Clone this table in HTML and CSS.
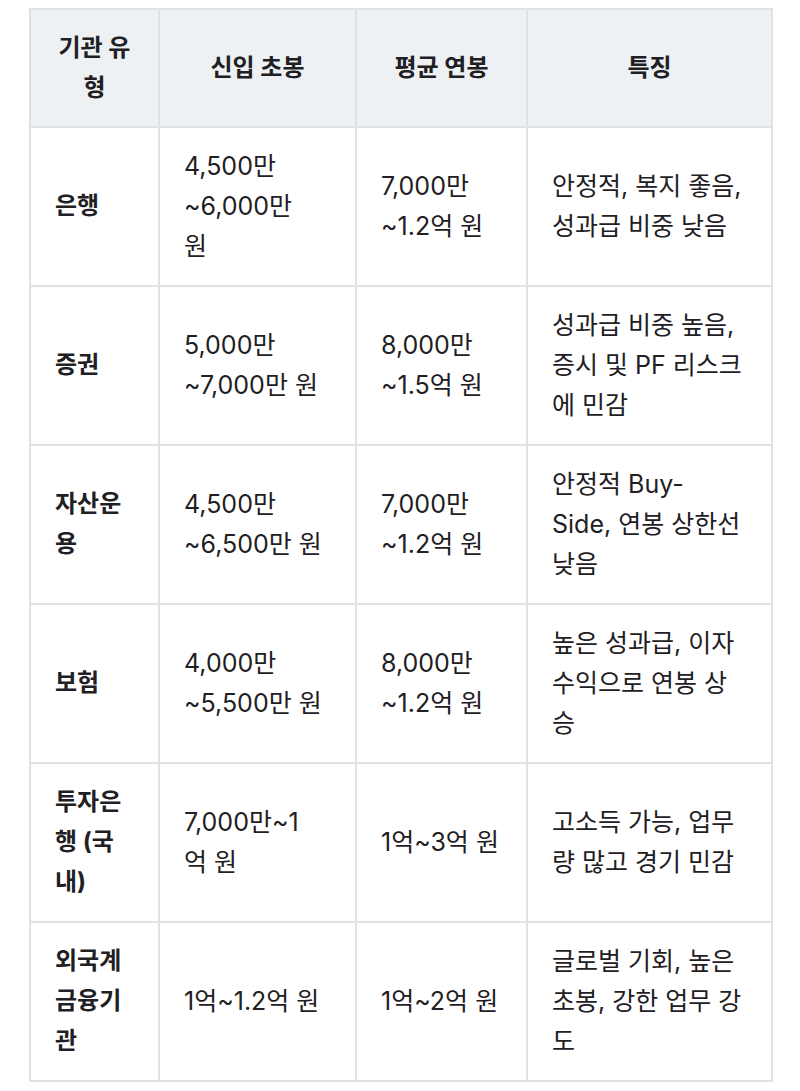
FILE: index.html
```html
<!DOCTYPE html>
<html lang="ko">
<head>
<meta charset="utf-8">
<link rel="stylesheet" href="styles.css">
</head>
<body>
<div class="wrap">
<table class="salary">
  <colgroup>
    <col class="c1"><col class="c2"><col class="c3"><col class="c4">
  </colgroup>
  <thead>
    <tr><th>기관 유<br>형</th><th>신입 초봉</th><th>평균 연봉</th><th>특징</th></tr>
  </thead>
  <tbody>
    <tr><td class="name">은행</td><td>4,500만<br>~6,000만<br>원</td><td>7,000만<br>~1.2억 원</td><td>안정적, 복지 좋음,<br>성과급 비중 낮음</td></tr>
    <tr><td class="name">증권</td><td>5,000만<br>~7,000만 원</td><td>8,000만<br>~1.5억 원</td><td>성과급 비중 높음,<br>증시 및 PF 리스크<br>에 민감</td></tr>
    <tr><td class="name">자산운<br>용</td><td>4,500만<br>~6,500만 원</td><td>7,000만<br>~1.2억 원</td><td>안정적 Buy-<br>Side, 연봉 상한선<br>낮음</td></tr>
    <tr><td class="name">보험</td><td>4,000만<br>~5,500만 원</td><td>8,000만<br>~1.2억 원</td><td>높은 성과급, 이자<br>수익으로 연봉 상<br>승</td></tr>
    <tr><td class="name">투자은<br>행 (국<br>내)</td><td>7,000만~1<br>억 원</td><td>1억~3억 원</td><td>고소득 가능, 업무<br>량 많고 경기 민감</td></tr>
    <tr><td class="name">외국계<br>금융기<br>관</td><td>1억~1.2억 원</td><td>1억~2억 원</td><td>글로벌 기회, 높은<br>초봉, 강한 업무 강<br>도</td></tr>
  </tbody>
</table>
</div>
</body>
</html>
```
FILE: styles.css
```css
html, body {
  margin: 0;
  padding: 0;
  background: #ffffff;
}
body {
  font-family: Inter, "Noto Sans CJK KR", sans-serif;
  color: #1f2023;
}
.wrap {
  padding: 8px 29px 0 29px;
}
.salary {
  width: 742px;
  border-collapse: collapse;
  table-layout: fixed;
  font-size: 25px;
  line-height: 40px;
  border: 2px solid #dde2e6;
}
.c1 { width: 129px; }
.c2 { width: 197px; }
.c3 { width: 171px; }
.c4 { width: 245px; }
.salary th,
.salary td {
  border: 2px solid #dde2e6;
  vertical-align: middle;
  text-align: left;
  white-space: nowrap;
}
.salary th {
  padding: 18px 23px;
  background: #eef1f4;
  font-weight: 700;
  font-size: 24px;
  text-align: center;
}
.salary td {
  padding: 18px 23px 19px 24px;
  height: 120px;
}
.salary td.name {
  font-weight: 700;
  font-size: 24px;
}
```
